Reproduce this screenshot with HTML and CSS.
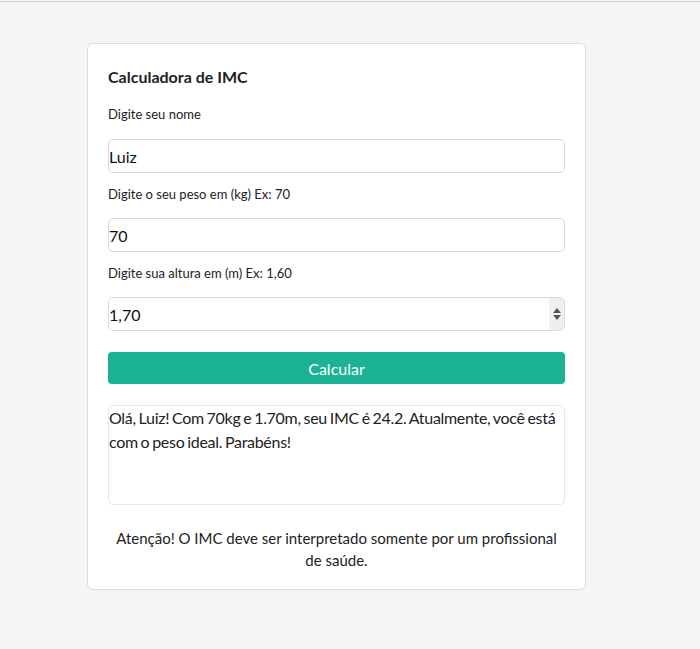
FILE: index.html
```html
<!DOCTYPE html>
<html lang="pt-BR">
<head>
<meta charset="utf-8">
<title>Calculadora de IMC</title>
<link rel="stylesheet" href="styles.css">
</head>
<body>
<div class="topline"></div>
<main class="page">
  <section class="card">
    <h1 class="title">Calculadora de IMC</h1>
    <label class="label">Digite seu nome</label>
    <div class="field"><input class="input" type="text" value="Luiz"></div>
    <label class="label">Digite o seu peso em (kg) Ex: 70</label>
    <div class="field"><input class="input" type="text" value="70"></div>
    <label class="label">Digite sua altura em (m) Ex: 1,60</label>
    <div class="field field-last">
      <input class="input" type="text" value="1,70">
      <span class="spinner"><span class="arr up"></span><span class="arr down"></span></span>
    </div>
    <button class="btn" type="button">Calcular</button>
    <div class="result">Olá, Luiz! Com 70kg e 1.70m, seu IMC é 24.2. Atualmente, você está com o peso ideal. Parabéns!</div>
    <p class="note">Atenção! O IMC deve ser interpretado somente por um profissional de saúde.</p>
  </section>
</main>
</body>
</html>
```
FILE: styles.css
```css
html, body { margin: 0; padding: 0; }
body {
  background: #f4f6f5;
  font-family: Lato, "Open Sans", sans-serif;
  color: #222;
  height: 649px;
}
.topline { height: 1px; margin-top: 1px; background: #d6d8d7; }
.page { padding: 41px 0 0 87px; }
.card {
  width: 457px;
  background: #fff;
  border: 1px solid #dcdcdc;
  border-radius: 6px;
  padding: 20px 20px 18px 20px;
  display: flex;
  flex-direction: column;
}
.title { font-size: 16px; font-weight: 700; margin: 1px 0 16px; line-height: 24px; color: #222; }
.label { font-size: 13px; line-height: 18px; color: #222; margin-bottom: 15px; }
.label:first-of-type { margin-bottom: 16px; }
.field { position: relative; margin-bottom: 12px; }
.field-last { margin-bottom: 21px; }
.input {
  box-sizing: border-box;
  display: block;
  width: 457px; height: 34px;
  border: 1px solid #d9d9d9; border-radius: 5px;
  padding: 0; font: inherit; font-size: 16px; color: #111;
  background: #fff; outline: none;
}
.spinner {
  position: absolute; right: 1px; top: 1px; width: 15px; height: 32px;
  background: #efefef; display: flex; flex-direction: column; align-items: center; justify-content: center; gap: 2px;
}
.arr { width: 0; height: 0; border-left: 4px solid transparent; border-right: 4px solid transparent; }
.up { border-bottom: 5px solid #555; }
.down { border-top: 5px solid #555; }
.btn {
  height: 32px; border: none; border-radius: 4px; background: #1bb394; color: #fff;
  font: inherit; font-size: 16px; margin: 0 0 21px; padding: 0;
}
.result {
  box-sizing: border-box; height: 100px; border: 1px solid #e8e8e8; border-radius: 5px;
  font-size: 16px; line-height: 24px; padding: 0; color: #222; letter-spacing: -0.3px; word-spacing: -1px;
}
.note { text-align: center; font-size: 15px; line-height: 22px; margin: 22px 0 0; color: #222; }
```
